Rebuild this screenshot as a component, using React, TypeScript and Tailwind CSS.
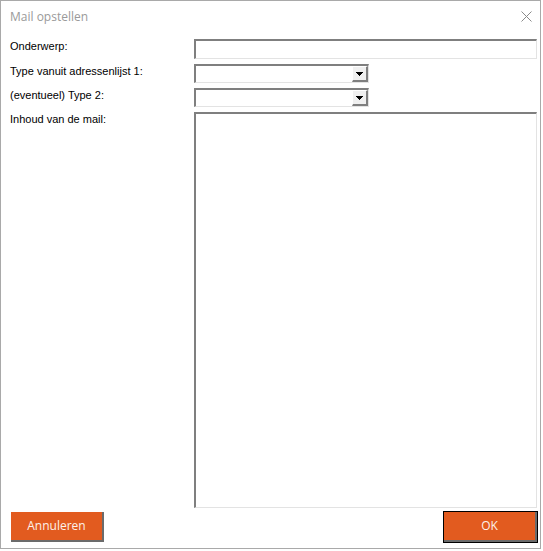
import React from 'react';

const label = "font-['Liberation_Sans',Arial,sans-serif] text-[11px] leading-[14px] text-black";
const sunken =
  'border-t-2 border-l-2 border-r border-b border-t-[#7f7f7f] border-l-[#7f7f7f] border-r-[#e3e3e3] border-b-[#e3e3e3] bg-white';

function Combo() {
  return (
    <div className={`${sunken} h-[19px] w-[175px] flex justify-end`}>
      <div className="w-[16px] h-full bg-[#f0f0f0] border-t border-l border-t-white border-l-white border-r-2 border-b-2 border-r-[#7f7f7f] border-b-[#7f7f7f] flex items-center justify-center">
        <svg width="7" height="4" viewBox="0 0 7 4">
          <path d="M0 0h7v1H6v1H5v1H4v1H3V3H2V2H1V1H0z" fill="#000" />
        </svg>
      </div>
    </div>
  );
}

function Button({ children, primary }: { children: React.ReactNode; primary?: boolean }) {
  return (
    <div className={primary ? 'border border-black' : 'border border-transparent'}>
      <button className="w-[93px] h-[30px] bg-[#e25b1f] border-r-2 border-b-2 border-r-[#6b6b6b] border-b-[#6b6b6b] font-['Open_Sans',Arial,sans-serif] text-[12px] text-[#fdf1ea]">
        {children}
      </button>
    </div>
  );
}

export default function App() {
  return (
    <div className="w-[541px] h-[549px] border border-[#a9a9a9] bg-white flex flex-col">
      {/* title bar */}
      <div className="h-[38px] flex items-start justify-between pl-[9px] pr-[8px]">
        <span className="mt-[7px] font-['Open_Sans',Arial,sans-serif] text-[12px] text-[#9a9a9a]">Mail opstellen</span>
        <svg className="mt-[10px]" width="11" height="11" viewBox="0 0 11 11">
          <path d="M0.5 0.5l10 10M10.5 0.5l-10 10" stroke="#8a8a8a" strokeWidth="1" />
        </svg>
      </div>

      {/* form */}
      <div className="flex-1 grid grid-cols-[184px_343px] grid-rows-[20px_19px_19px_1fr] gap-y-[5px] pl-[9px]">
        <div className={label}>Onderwerp:</div>
        <div className={`${sunken} h-[20px]`} />
        <div className={label}>Type vanuit adressenlijst 1:</div>
        <Combo />
        <div className={label}>(eventueel) Type 2:</div>
        <Combo />
        <div className={label}>Inhoud van de mail:</div>
        <div className={`${sunken}`} />
      </div>

      {/* buttons */}
      <div className="flex justify-between pl-[9px] pr-[2px] pt-[3px] pb-[5px]">
        <Button>Annuleren</Button>
        <Button primary>OK</Button>
      </div>
    </div>
  );
}
